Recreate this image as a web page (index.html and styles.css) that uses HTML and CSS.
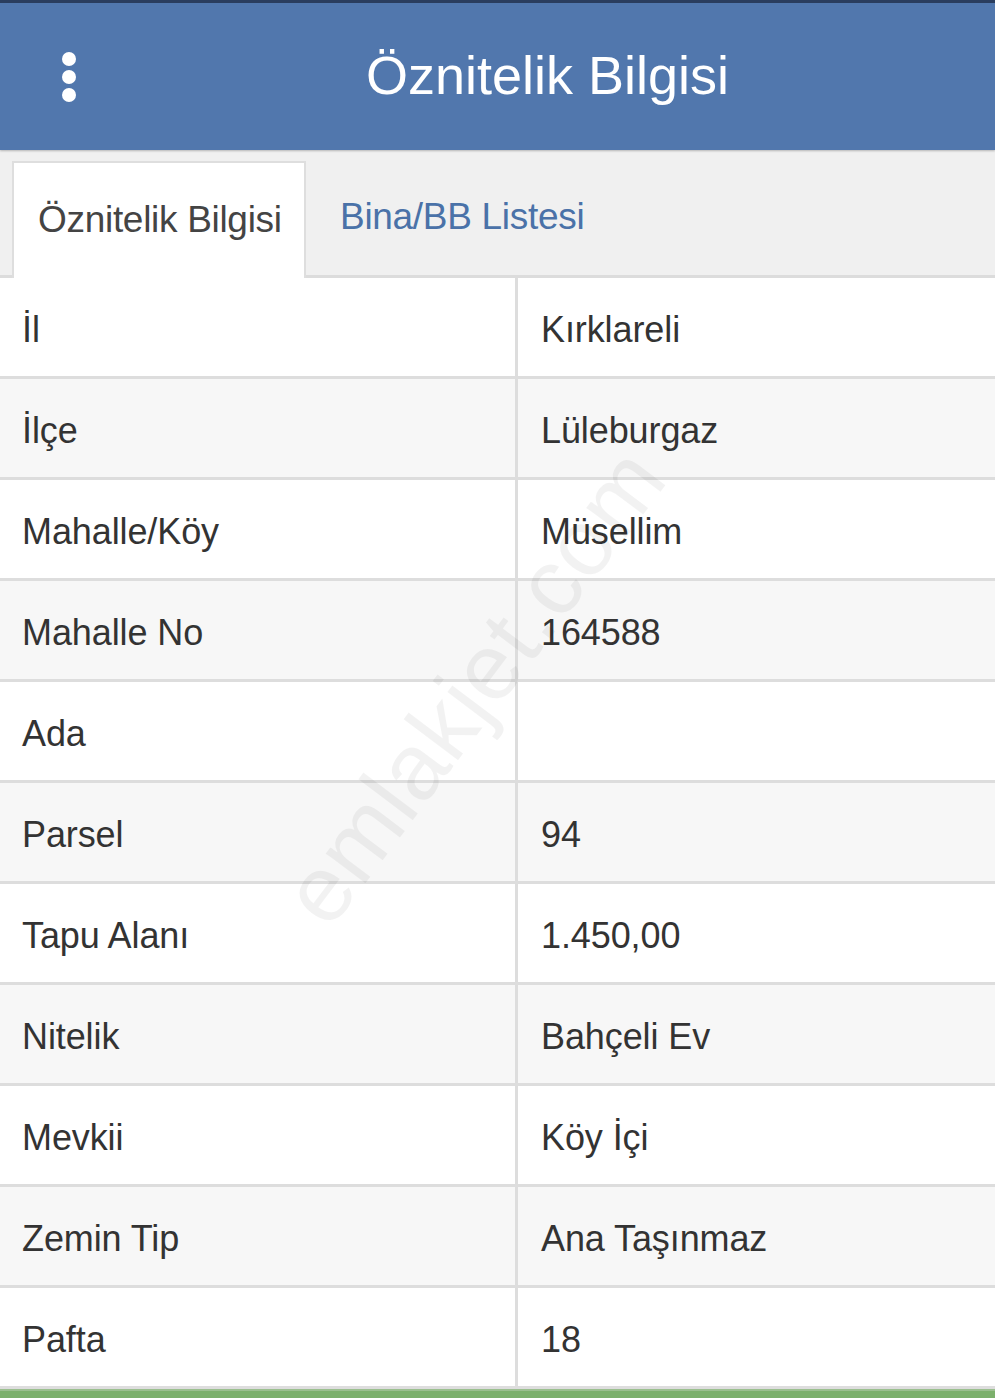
FILE: index.html
```html
<!DOCTYPE html>
<html lang="tr">
<head>
<meta charset="utf-8">
<title>Öznitelik Bilgisi</title>
<link rel="stylesheet" href="styles.css">
</head>
<body>
<div class="app">
  <header class="topbar">
    <button class="menu-btn" aria-label="Menü">
      <svg width="16" height="52" viewBox="0 0 16 52">
        <circle cx="8" cy="8" r="7" fill="#fff"/>
        <circle cx="8" cy="26" r="7" fill="#fff"/>
        <circle cx="8" cy="44" r="7" fill="#fff"/>
      </svg>
    </button>
    <h1 class="title">Öznitelik Bilgisi</h1>
  </header>

  <nav class="tabs">
    <div class="tab active">Öznitelik Bilgisi</div>
    <div class="tab">Bina/BB Listesi</div>
  </nav>

  <div class="table-wrap">
    <div class="row"><div class="cell key">İl</div><div class="cell val">Kırklareli</div></div>
    <div class="row"><div class="cell key">İlçe</div><div class="cell val">Lüleburgaz</div></div>
    <div class="row"><div class="cell key">Mahalle/Köy</div><div class="cell val">Müsellim</div></div>
    <div class="row"><div class="cell key">Mahalle No</div><div class="cell val">164588</div></div>
    <div class="row"><div class="cell key">Ada</div><div class="cell val"></div></div>
    <div class="row"><div class="cell key">Parsel</div><div class="cell val">94</div></div>
    <div class="row"><div class="cell key">Tapu Alanı</div><div class="cell val">1.450,00</div></div>
    <div class="row"><div class="cell key">Nitelik</div><div class="cell val">Bahçeli Ev</div></div>
    <div class="row"><div class="cell key">Mevkii</div><div class="cell val">Köy İçi</div></div>
    <div class="row"><div class="cell key">Zemin Tip</div><div class="cell val">Ana Taşınmaz</div></div>
    <div class="row"><div class="cell key">Pafta</div><div class="cell val">18</div></div>
    <div class="watermark">emlakjet.com</div>
  </div>

  <footer class="footer-bar"></footer>
</div>
</body>
</html>
```

FILE: styles.css
```css
* {
  box-sizing: border-box;
}

html, body {
  margin: 0;
  padding: 0;
  background: #ffffff;
}

body {
  font-family: "Liberation Sans", Arial, Helvetica, sans-serif;
  color: #333333;
}

.app {
  width: 995px;
  height: 1398px;
  overflow: hidden;
  display: flex;
  flex-direction: column;
}

/* Top bar */
.topbar {
  height: 150px;
  flex: none;
  background: #5177ad;
  border-top: 3px solid #2a3d5e;
  display: flex;
  align-items: center;
  padding-left: 61px;
  box-shadow: 0 1px 2px rgba(0, 0, 0, 0.25);
  position: relative;
  z-index: 1;
}

.menu-btn {
  background: none;
  border: 0;
  padding: 0;
  display: flex;
}

.title {
  margin: -3px 0 0 289px;
  font-weight: normal;
  font-size: 54px;
  color: #ffffff;
  letter-spacing: 0;
  line-height: 1;
}

/* Tabs */
.tabs {
  height: 128px;
  flex: none;
  background: #f0f0f0;
  padding: 11px 0 0 12px;
  display: flex;
  align-items: stretch;
  border-bottom: 3px solid #dcdcdc;
}

.tab {
  font-size: 37px;
  letter-spacing: -0.3px;
  color: #4a72a8;
  display: flex;
  align-items: center;
  padding: 0 25px 2px 34px;
}

.tab.active {
  background: #ffffff;
  color: #444444;
  border: 2px solid #dedede;
  border-bottom: 0;
  width: 294px;
  padding: 0 0 2px 24px;
  margin-bottom: -3px;
}

/* Attribute table */
.table-wrap {
  position: relative;
  flex: none;
}

.row {
  display: flex;
  height: 101px;
  border-bottom: 3px solid #dddddd;
  background: #ffffff;
}

.row:nth-child(even) {
  background: #f7f7f7;
}

.row:last-of-type {
  border-bottom: 0;
  height: 98px;
}

.cell {
  display: flex;
  align-items: center;
  padding-top: 5px;
  font-size: 36px;
  letter-spacing: -0.1px;
  color: #333333;
}

.key {
  width: 518px;
  flex: none;
  padding-left: 22px;
  border-right: 3px solid #dddddd;
}

.val {
  flex: 1;
  padding-left: 23px;
}

.watermark {
  position: absolute;
  left: 474px;
  top: 408px;
  transform: translate(-50%, -50%) rotate(-53deg);
  font-size: 94px;
  color: rgba(0, 0, 0, 0.05);
  white-space: nowrap;
  pointer-events: none;
  letter-spacing: 1px;
}

.footer-bar {
  flex: none;
  height: 12px;
  background: #7cb06c;
  border-top: 2px solid #9bbf8f;
}
```
